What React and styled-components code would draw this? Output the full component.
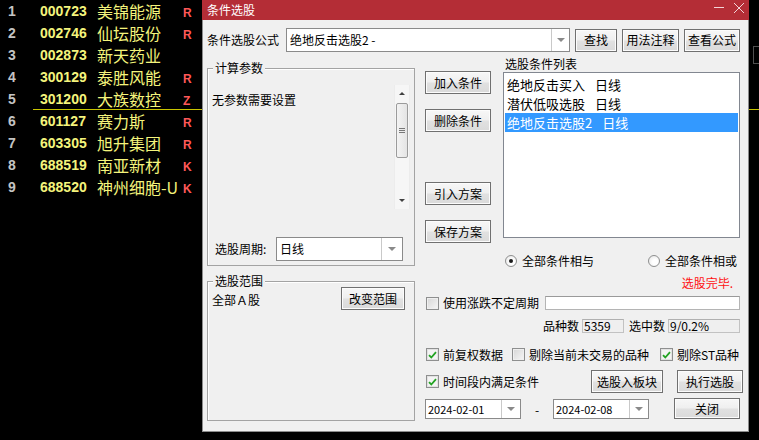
import React from 'react';
import styled, { createGlobalStyle } from 'styled-components';

const stocks = [
	{ code: '000723', name: '美锦能源', tag: 'R' },
	{ code: '002746', name: '仙坛股份', tag: 'R' },
	{ code: '002873', name: '新天药业', tag: '', edge: true },
	{ code: '300129', name: '泰胜风能', tag: 'R' },
	{ code: '301200', name: '大族数控', tag: 'Z', marked: true },
	{ code: '601127', name: '赛力斯', tag: 'R' },
	{ code: '603305', name: '旭升集团', tag: 'R' },
	{ code: '688519', name: '南亚新材', tag: 'K' },
	{ code: '688520', name: '神州细胞-U', tag: 'K' },
];

const conditions = [
	{ name: '绝地反击买入', period: '日线' },
	{ name: '潜伏低吸选股', period: '日线' },
	{ name: '绝地反击选股2', period: '日线', selected: true },
];

const Caret = () => <CaretShape />;

const Check = () => (
	<svg width="9" height="8" viewBox="0 0 9 8">
		<path d="M1 4.2 L3.3 6.5 L8 1.2" fill="none" stroke="#23a323" strokeWidth="1.8" />
	</svg>
);

function App() {
	return (
		<>
			<GlobalStyle />
			<Page>
				<StockList>
					{stocks.map((s, i) => (
						<StockRow key={s.code}>
							<Index>{i + 1}</Index>
							<RowBody $marked={s.marked}>
								<Code>{s.code}</Code>
								<Name>{s.name}</Name>
								<Tag>{s.tag}</Tag>
								{s.edge ? <EdgeBox /> : null}
							</RowBody>
						</StockRow>
					))}
				</StockList>

				<Dialog>
					<TitleBar>
						<TitleText>条件选股</TitleText>
						<svg width="40" height="20" viewBox="0 0 40 20">
							<path d="M5 7.5 H15" stroke="#f3d4d7" strokeWidth="1" />
							<path d="M25 3 L35 13 M35 3 L25 13" stroke="#f3d4d7" strokeWidth="1" />
						</svg>
					</TitleBar>

					<DialogBody>
						<FormulaRow>
							<FormulaLabel>条件选股公式</FormulaLabel>
							<Combo $w={284} $h={24}>
								<ComboText>绝地反击选股2 -</ComboText>
								<ComboButton>
									<Caret />
								</ComboButton>
							</Combo>
							<Button $w={42}>查找</Button>
							<Button $w={57}>用法注释</Button>
							<Button $w={56}>查看公式</Button>
						</FormulaRow>

						<Main>
							<LeftColumn>
								<GroupBox $h={198} $mt={16}>
									<GroupTitle>计算参数</GroupTitle>
									<ParamArea>
										<ParamText>无参数需要设置</ParamText>
										<ScrollBar>
											<ScrollArrow>
												<ArrowUp />
											</ScrollArrow>
											<ScrollThumb>
												<Grip />
												<Grip />
												<Grip />
											</ScrollThumb>
											<ScrollSpacer />
											<ScrollArrow>
												<ArrowDown />
											</ScrollArrow>
										</ScrollBar>
									</ParamArea>
									<PeriodRow>
										<PeriodLabel>选股周期:</PeriodLabel>
										<Combo $w={127} $h={24}>
											<ComboText>日线</ComboText>
											<ComboButton $w={20}>
												<Caret />
											</ComboButton>
										</Combo>
									</PeriodRow>
								</GroupBox>

								<GroupBox $h={140} $mt={15}>
									<GroupTitle>选股范围</GroupTitle>
									<RangeRow>
										<RangeText>全部Ａ股</RangeText>
										<Button $w={64}>改变范围</Button>
									</RangeRow>
								</GroupBox>
							</LeftColumn>

							<RightColumn>
								<TopSection>
									<ButtonColumn>
										<Button $w={66} $mt={19}>加入条件</Button>
										<Button $w={66} $mt={15}>删除条件</Button>
										<Button $w={66} $mt={50}>引入方案</Button>
										<Button $w={66} $mt={15}>保存方案</Button>
									</ButtonColumn>
									<ListColumn>
										<ListLabel>选股条件列表</ListLabel>
										<ListBox>
											{conditions.map((c) => (
												<ListItem key={c.name} $selected={c.selected}>
													{c.name}
													<ItemPeriod>{c.period}</ItemPeriod>
												</ListItem>
											))}
										</ListBox>
									</ListColumn>
								</TopSection>

								<RadioRow>
									<Option>
										<Radio $checked />
										<span>全部条件相与</span>
									</Option>
									<Option>
										<Radio />
										<span>全部条件相或</span>
									</Option>
								</RadioRow>

								<StatusText>选股完毕.</StatusText>

								<FlexRow $mt={6} $h={14}>
									<Option $ml={1}>
										<CheckBox />
										<span>使用涨跌不定周期</span>
									</Option>
									<TextInput />
								</FlexRow>

								<CountsRow>
									<span>品种数</span>
									<CountBox $w={42}>5359</CountBox>
									<CountLabel>选中数</CountLabel>
									<CountBox $w={72}>9/0.2%</CountBox>
								</CountsRow>

								<FlexRow $mt={15} $h={13}>
									<Option $ml={1}>
										<CheckBox $checked>
											<Check />
										</CheckBox>
										<span>前复权数据</span>
									</Option>
									<Option $ml={9}>
										<CheckBox />
										<span>剔除当前未交易的品种</span>
									</Option>
									<Option $ml={11}>
										<CheckBox $checked>
											<Check />
										</CheckBox>
										<span>剔除ST品种</span>
									</Option>
								</FlexRow>

								<FlexRow $mt={9} $h={23}>
									<Option $ml={1}>
										<CheckBox $checked>
											<Check />
										</CheckBox>
										<span>时间段内满足条件</span>
									</Option>
									<Button $w={72} $ml={52}>选股入板块</Button>
									<Button $w={66} $ml={14}>执行选股</Button>
								</FlexRow>

								<FlexRow $mt={5} $h={21}>
									<Combo $w={96} $h={20}>
										<DateText>2024-02-01</DateText>
										<ComboButton $w={18}>
											<Caret />
										</ComboButton>
									</Combo>
									<Dash>-</Dash>
									<Combo $w={96} $h={20}>
										<DateText>2024-02-08</DateText>
										<ComboButton $w={18}>
											<Caret />
										</ComboButton>
									</Combo>
									<Button $w={66} $h={21} $ml={25}>关闭</Button>
								</FlexRow>
							</RightColumn>
						</Main>
					</DialogBody>
				</Dialog>
			</Page>
		</>
	);
}

export default App;

const GlobalStyle = createGlobalStyle`
	html, body {
		margin: 0;
		padding: 0;
		background: #000;
	}
	body {
		font-family: "Noto Sans CJK SC", "Liberation Sans", sans-serif;
	}
`;

const Page = styled.div`
	position: relative;
	width: 759px;
	height: 440px;
	background: #000;
	overflow: hidden;
`;

const StockList = styled.div`
	display: flex;
	flex-direction: column;
`;

const StockRow = styled.div`
	display: flex;
	height: 22px;
`;

const Index = styled.div`
	width: 25px;
	padding-left: 8px;
	font: bold 14px/22px "Liberation Sans", sans-serif;
	color: #c4c4c4;
`;

const RowBody = styled.div`
	flex: 1;
	display: flex;
	align-items: center;
	box-sizing: border-box;
	border-bottom: 1px solid ${(p) => (p.$marked ? '#c8c400' : 'transparent')};
`;

const Code = styled.div`
	width: 57px;
	padding-left: 7px;
	font: bold 14px "Liberation Sans", sans-serif;
	color: #f4f47c;
`;

const Name = styled.div`
	width: 86px;
	font: 16px/22px "Noto Sans CJK SC", sans-serif;
	color: #f4f47c;
	white-space: nowrap;
`;

const Tag = styled.div`
	padding-top: 5px;
	font: bold 12px "Liberation Sans", sans-serif;
	color: #ff5858;
`;

const EdgeBox = styled.div`
	margin-left: auto;
	margin-right: -4px;
	width: 10px;
	height: 18px;
	box-sizing: border-box;
	border: 1px solid #505050;
`;

const Dialog = styled.div`
	position: absolute;
	left: 202px;
	top: 0;
	width: 547px;
	height: 432px;
	display: flex;
	flex-direction: column;
	font-family: "Noto Sans CJK SC", sans-serif;
	font-size: 12px;
	line-height: 14px;
	color: #000;
`;

const TitleBar = styled.div`
	display: flex;
	align-items: center;
	justify-content: space-between;
	height: 20px;
	padding-left: 5px;
	background: #b42d36;
	color: #fff;
	flex: none;
`;

const TitleText = styled.span`
	font-size: 12px;
	line-height: 20px;
`;

const DialogBody = styled.div`
	flex: 1;
	display: flex;
	flex-direction: column;
	padding: 8px 8px 0 4px;
	background: #f0f0f0;
	border: 1px solid #8c8c8c;
	border-top: none;
`;

const FormulaRow = styled.div`
	display: flex;
	align-items: center;
	gap: 5px;
	height: 24px;
`;

const FormulaLabel = styled.div`
	width: 75px;
	white-space: nowrap;
`;

const Button = styled.button`
	flex: none;
	width: ${(p) => p.$w}px;
	height: ${(p) => p.$h || 23}px;
	margin: ${(p) => p.$mt || 0}px 0 0 ${(p) => p.$ml || 0}px;
	padding: 0;
	box-sizing: border-box;
	border: 1px solid #707070;
	border-radius: 0;
	background: linear-gradient(#f7f7f7 0%, #efefef 48%, #e1e1e1 52%, #dadada 100%);
	box-shadow: inset 0 0 0 1px #fcfcfc;
	font-family: "Noto Sans CJK SC", sans-serif;
	font-size: 12px;
	line-height: 14px;
	color: #000;
	white-space: nowrap;
`;

const Combo = styled.div`
	flex: none;
	display: flex;
	width: ${(p) => p.$w}px;
	height: ${(p) => p.$h}px;
	box-sizing: border-box;
	border: 1px solid #8a8a8a;
	background: #fff;
`;

const ComboText = styled.div`
	flex: 1;
	display: flex;
	align-items: center;
	padding-left: 3px;
	white-space: pre;
	overflow: hidden;
`;

const DateText = styled(ComboText)`
	font-size: 11px;
	padding-left: 2px;
`;

const ComboButton = styled.div`
	width: ${(p) => p.$w || 17}px;
	border-left: 1px solid #c9c9c9;
	display: flex;
	align-items: center;
	justify-content: center;
`;

const CaretShape = styled.span`
	width: 0;
	height: 0;
	border-left: 4px solid transparent;
	border-right: 4px solid transparent;
	border-top: 4px solid #8a8a8a;
`;

const Main = styled.div`
	display: grid;
	grid-template-columns: 208px 315px;
	column-gap: 10px;
	align-items: start;
`;

const LeftColumn = styled.div`
	display: flex;
	flex-direction: column;
`;

const GroupBox = styled.div`
	display: flex;
	flex-direction: column;
	height: ${(p) => p.$h}px;
	margin-top: ${(p) => p.$mt}px;
	box-sizing: border-box;
	border: 1px solid #a3a3a3;
	box-shadow: inset 1px 1px 0 #fff;
`;

const GroupTitle = styled.div`
	align-self: flex-start;
	margin: -8px 0 0 5px;
	padding: 0 2px;
	height: 14px;
	background: #f0f0f0;
`;

const ParamArea = styled.div`
	display: flex;
	margin-top: 10px;
	height: 124px;
`;

const ParamText = styled.div`
	flex: 1;
	padding: 8px 0 0 4px;
`;

const ScrollBar = styled.div`
	display: flex;
	flex-direction: column;
	width: 16px;
	margin-right: 4px;
	box-sizing: border-box;
	background: #f6f6f6;
	border-left: 1px solid #ececec;
	border-right: 1px solid #ececec;
`;

const ScrollArrow = styled.div`
	height: 17px;
	display: flex;
	align-items: center;
	justify-content: center;
`;

const ArrowUp = styled.span`
	width: 0;
	height: 0;
	border-left: 3px solid transparent;
	border-right: 3px solid transparent;
	border-bottom: 3px solid #404040;
`;

const ArrowDown = styled.span`
	width: 0;
	height: 0;
	border-left: 3px solid transparent;
	border-right: 3px solid transparent;
	border-top: 3px solid #404040;
`;

const ScrollThumb = styled.div`
	height: 55px;
	margin: 1px 1px 0;
	box-sizing: border-box;
	border: 1px solid #9b9b9b;
	border-radius: 2px;
	background: linear-gradient(90deg, #f3f3f3, #e4e4e4);
	display: flex;
	flex-direction: column;
	align-items: center;
	justify-content: center;
	gap: 1px;
`;

const Grip = styled.span`
	width: 6px;
	height: 1px;
	background: #777;
`;

const ScrollSpacer = styled.div`
	flex: 1;
`;

const PeriodRow = styled.div`
	display: flex;
	align-items: center;
	margin-top: 28px;
	padding-left: 7px;
`;

const PeriodLabel = styled.div`
	width: 61px;
`;

const RangeRow = styled.div`
	display: flex;
	align-items: center;
	justify-content: space-between;
	margin-top: -1px;
	padding: 0 9px 0 4px;
`;

const RangeText = styled.div`
	padding-top: 3px;
`;

const RightColumn = styled.div`
	display: flex;
	flex-direction: column;
`;

const TopSection = styled.div`
	display: flex;
	gap: 12px;
`;

const ButtonColumn = styled.div`
	display: flex;
	flex-direction: column;
	width: 66px;
`;

const ListColumn = styled.div`
	display: flex;
	flex-direction: column;
	width: 237px;
`;

const ListLabel = styled.div`
	margin-top: 5px;
	padding-left: 2px;
`;

const ListBox = styled.div`
	margin-top: 1px;
	height: 166px;
	box-sizing: border-box;
	padding: 2px 1px;
	border: 1px solid #828790;
	background: #fff;
`;

const ListItem = styled.div`
	height: 19px;
	line-height: 19px;
	padding-left: 2px;
	font-size: 13px;
	white-space: nowrap;
	background: ${(p) => (p.$selected ? '#3399ff' : 'transparent')};
	color: ${(p) => (p.$selected ? '#fff' : '#000')};
`;

const ItemPeriod = styled.span`
	margin-left: 10px;
`;

const RadioRow = styled.div`
	display: flex;
	justify-content: space-between;
	height: 14px;
	margin-top: 11px;
	padding: 0 3px 0 80px;
`;

const Option = styled.label`
	display: flex;
	align-items: center;
	gap: 4px;
	margin-left: ${(p) => p.$ml || 0}px;
	white-space: nowrap;
`;

const Radio = styled.span`
	display: flex;
	align-items: center;
	justify-content: center;
	width: 12px;
	height: 12px;
	margin-right: 1px;
	box-sizing: border-box;
	border-radius: 50%;
	border: 1px solid #8e8f8f;
	background: radial-gradient(circle at 60% 60%, #ffffff 30%, #e2e2e2 100%);

	&::after {
		content: '';
		display: ${(p) => (p.$checked ? 'block' : 'none')};
		width: 4px;
		height: 4px;
		border-radius: 50%;
		background: #1a1a1a;
	}
`;

const StatusText = styled.div`
	margin-top: 8px;
	height: 14px;
	padding-right: 7px;
	text-align: right;
	color: #ff1010;
`;

const FlexRow = styled.div`
	display: flex;
	align-items: center;
	margin-top: ${(p) => p.$mt}px;
	height: ${(p) => p.$h}px;
`;

const CheckBox = styled.span`
	display: flex;
	align-items: center;
	justify-content: center;
	flex: none;
	width: 13px;
	height: 13px;
	box-sizing: border-box;
	border: 1px solid #8e8f8f;
	background: ${(p) =>
		p.$checked ? '#f4f4f4' : 'linear-gradient(135deg, #d6d6d6 0%, #f6f6f6 100%)'};
	box-shadow: inset 0 0 0 1px ${(p) => (p.$checked ? '#e2e2e2' : '#efefef')};
`;

const TextInput = styled.div`
	margin-left: auto;
	width: 195px;
	height: 14px;
	box-sizing: border-box;
	border: 1px solid #b4b4b4;
	border-top-color: #9a9a9a;
	background: #fff;
`;

const CountsRow = styled.div`
	display: flex;
	align-items: center;
	justify-content: flex-end;
	gap: 3px;
	margin-top: 9px;
	height: 14px;
`;

const CountLabel = styled.span`
	margin-left: 2px;
`;

const CountBox = styled.div`
	width: ${(p) => p.$w}px;
	height: 14px;
	box-sizing: border-box;
	padding-left: 1px;
	border: 1px solid #c2c2c2;
	border-top-color: #b0b0b0;
	background: #efefef;
	line-height: 12px;
`;

const Dash = styled.div`
	width: 33px;
	padding-top: 3px;
	text-align: center;
`;
